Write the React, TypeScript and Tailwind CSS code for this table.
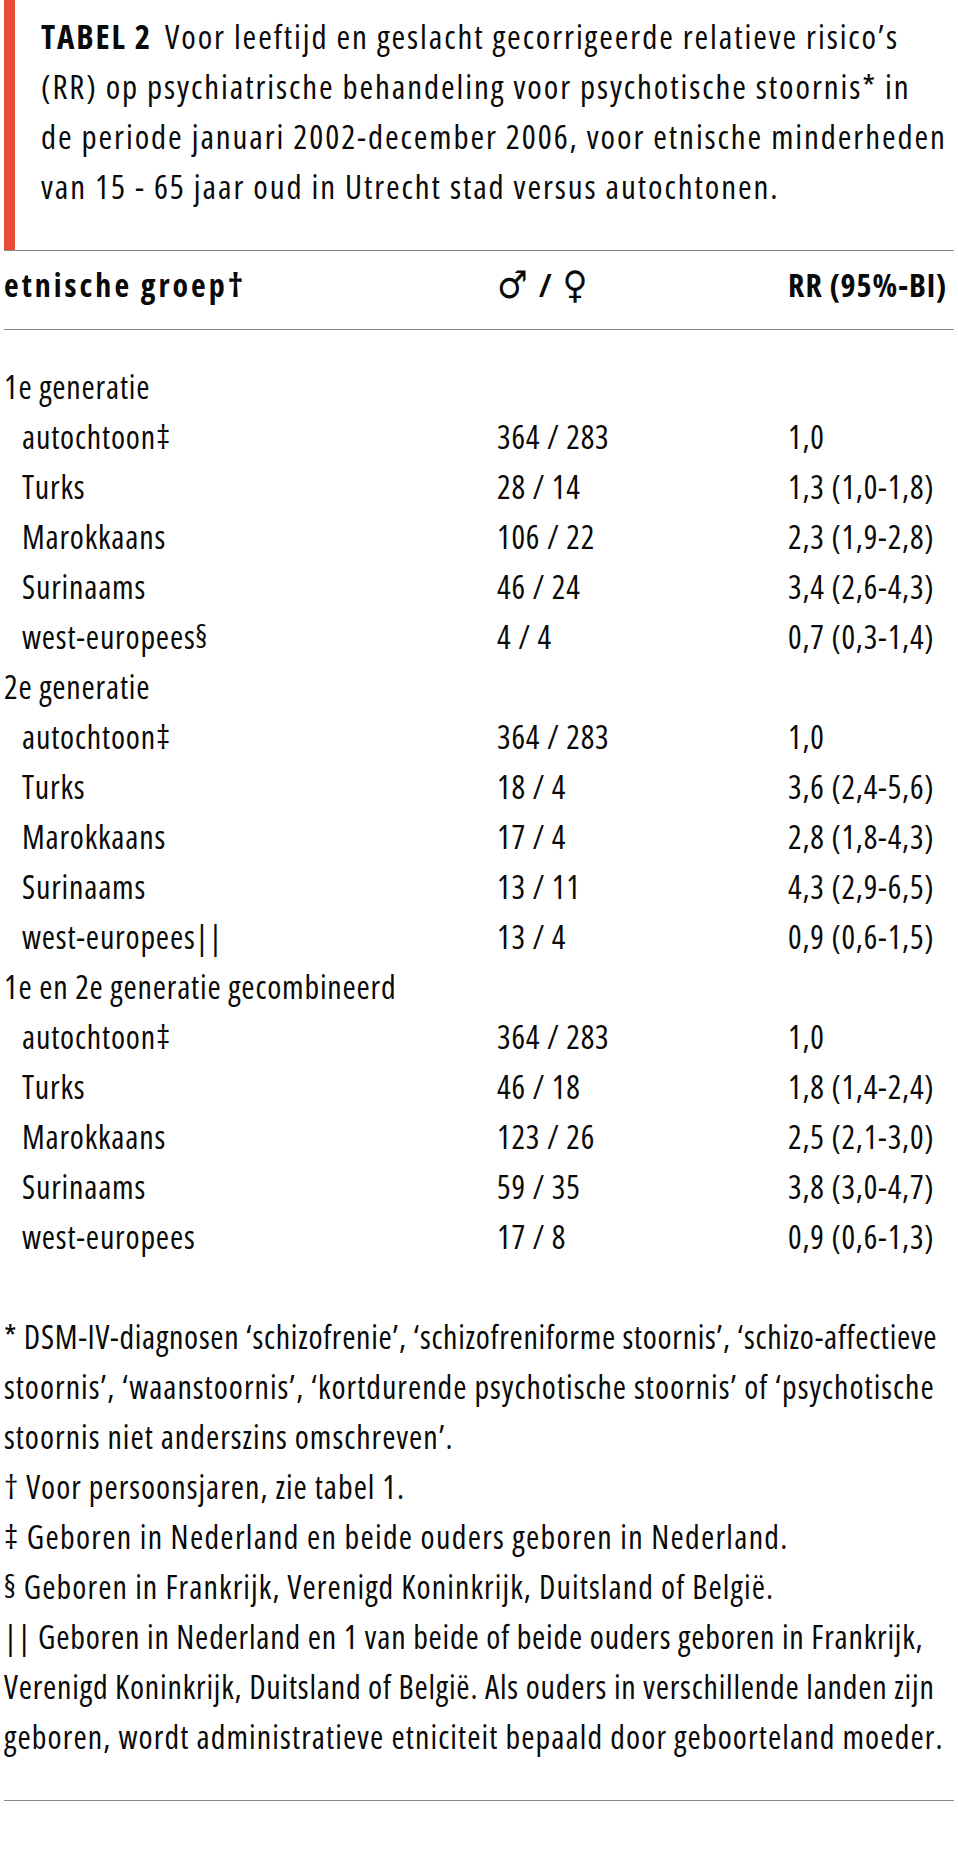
import React from 'react';

type Row = { label: string; n?: string; rr?: string; section?: boolean };

const rows: Row[] = [
  { label: '1e generatie', section: true },
  { label: 'autochtoon‡', n: '364 / 283', rr: '1,0' },
  { label: 'Turks', n: '28 / 14', rr: '1,3 (1,0-1,8)' },
  { label: 'Marokkaans', n: '106 / 22', rr: '2,3 (1,9-2,8)' },
  { label: 'Surinaams', n: '46 / 24', rr: '3,4 (2,6-4,3)' },
  { label: 'west-europees§', n: '4 / 4', rr: '0,7 (0,3-1,4)' },
  { label: '2e generatie', section: true },
  { label: 'autochtoon‡', n: '364 / 283', rr: '1,0' },
  { label: 'Turks', n: '18 / 4', rr: '3,6 (2,4-5,6)' },
  { label: 'Marokkaans', n: '17 / 4', rr: '2,8 (1,8-4,3)' },
  { label: 'Surinaams', n: '13 / 11', rr: '4,3 (2,9-6,5)' },
  { label: 'west-europees||', n: '13 / 4', rr: '0,9 (0,6-1,5)' },
  { label: '1e en 2e generatie gecombineerd', section: true },
  { label: 'autochtoon‡', n: '364 / 283', rr: '1,0' },
  { label: 'Turks', n: '46 / 18', rr: '1,8 (1,4-2,4)' },
  { label: 'Marokkaans', n: '123 / 26', rr: '2,5 (2,1-3,0)' },
  { label: 'Surinaams', n: '59 / 35', rr: '3,8 (3,0-4,7)' },
  { label: 'west-europees', n: '17 / 8', rr: '0,9 (0,6-1,3)' },
];

// each line carries its own tracking so the lines end where the print does
const footnotes: { text: string; track: string }[][] = [
  [
    { text: '* DSM-IV-diagnosen ‘schizofrenie’, ‘schizofreniforme stoornis’, ‘schizo-affectieve', track: 'tracking-[0.7px]' },
    { text: 'stoornis’, ‘waanstoornis’, ‘kortdurende psychotische stoornis’ of ‘psychotische', track: 'tracking-[1px]' },
    { text: 'stoornis niet anderszins omschreven’.', track: 'tracking-[1px]' },
  ],
  [{ text: '† Voor persoonsjaren, zie tabel 1.', track: 'tracking-[1px]' }],
  [{ text: '‡ Geboren in Nederland en beide ouders geboren in Nederland.', track: 'tracking-[1.3px]' }],
  [{ text: '§ Geboren in Frankrijk, Verenigd Koninkrijk, Duitsland of België.', track: 'tracking-[1.1px]' }],
  [
    { text: '|| Geboren in Nederland en 1 van beide of beide ouders geboren in Frankrijk,', track: 'tracking-[0.8px]' },
    { text: 'Verenigd Koninkrijk, Duitsland of België. Als ouders in verschillende landen zijn', track: 'tracking-[0.8px]' },
    { text: 'geboren, wordt administratieve etniciteit bepaald door geboorteland moeder.', track: 'tracking-[1.1px]' },
  ],
];

const grid = 'grid grid-cols-[493px_291px_1fr]';

export default function App() {
  return (
    <div className="w-[958px] bg-white px-[4px] pb-[48px] text-[32px] leading-[50px] text-[#0a0a0a] font-['Open_Sans','Liberation_Sans',sans-serif] font-stretch-[75%]">
      {/* Caption */}
      <div className="border-l-[11px] border-[#e84e35] pl-[26px] pt-[12px] pb-[38px] whitespace-nowrap text-[33px] tracking-[1.9px]">
        <span className="font-bold mr-[13px]">TABEL 2</span>
        Voor leeftijd en geslacht gecorrigeerde relatieve risico’s
        <br />
        (RR) op psychiatrische behandeling voor psychotische stoornis* in
        <br />
        de periode januari 2002-december 2006, voor etnische minderheden
        <br />
        van 15 - 65 jaar oud in Utrecht stad versus autochtonen.
      </div>

      {/* Header */}
      <div className={`${grid} border-t border-b border-[#8a8a8a] pt-[9px] pb-[19px] font-bold tracking-[1px] whitespace-nowrap`}>
        <div className="tracking-[3px]">etnische groep†</div>
        <div className="flex items-center gap-[10px]">
          <span className="font-normal font-['DejaVu_Sans',sans-serif] text-[38px]">♂</span>
          <span>/</span>
          <span className="font-normal font-['DejaVu_Sans',sans-serif] text-[38px]">♀</span>
        </div>
        <div>RR (95%-BI)</div>
      </div>

      {/* Body */}
      <div className="pt-[32px] pb-[50px] tracking-[0.8px]">
        {rows.map((r, i) => (
          <div key={i} className={`${grid} whitespace-nowrap`}>
            <div className={r.section ? '' : 'pl-[18px]'}>{r.label}</div>
            <div>{r.n}</div>
            <div>{r.rr}</div>
          </div>
        ))}
      </div>

      {/* Footnotes */}
      <div className="border-b border-[#8a8a8a] pb-[38px] whitespace-nowrap">
        {footnotes.map((lines, i) => (
          <p key={i}>
            {lines.map((l, j) => (
              <React.Fragment key={j}>
                {j > 0 && <br />}
                <span className={l.track}>{l.text}</span>
              </React.Fragment>
            ))}
          </p>
        ))}
      </div>
    </div>
  );
}
